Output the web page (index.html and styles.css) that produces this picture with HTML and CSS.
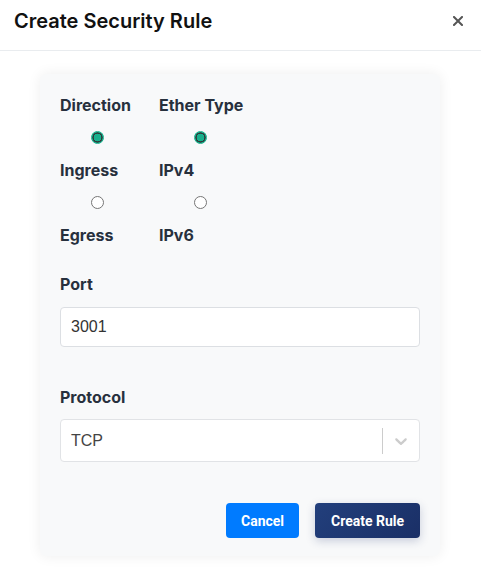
FILE: index.html
```html
<!DOCTYPE html>
<html lang="en">
<head>
<meta charset="utf-8">
<title>Create Security Rule</title>
<link rel="stylesheet" href="styles.css">
</head>
<body>
<div class="modal">
  <div class="modal-header">
    <h2 class="modal-title">Create Security Rule</h2>
    <button class="close-btn" aria-label="Close">
      <svg width="10" height="10" viewBox="0 0 10 10"><path d="M1 1L9 9M9 1L1 9" stroke="#555" stroke-width="2" stroke-linecap="square"/></svg>
    </button>
  </div>
  <div class="modal-body">
    <div class="card">
      <div class="radio-grid">
        <div class="radio-col col-direction">
          <div class="field-label">Direction</div>
          <input type="radio" class="radio" name="direction" checked>
          <div class="field-label">Ingress</div>
          <input type="radio" class="radio" name="direction">
          <div class="field-label">Egress</div>
        </div>
        <div class="radio-col col-ether">
          <div class="field-label">Ether Type</div>
          <input type="radio" class="radio" name="ether" checked>
          <div class="field-label">IPv4</div>
          <input type="radio" class="radio" name="ether">
          <div class="field-label">IPv6</div>
        </div>
      </div>

      <div class="field-label port-label">Port</div>
      <input class="text-input" type="text" value="3001">

      <div class="field-label protocol-label">Protocol</div>
      <div class="select">
        <div class="select-value">TCP</div>
        <span class="select-sep"></span>
        <div class="select-indicator">
          <svg width="20" height="20" viewBox="0 0 20 20"><path fill="#ccc" d="M4.516 7.548c0.436-0.446 1.043-0.481 1.576 0l3.908 3.747 3.908-3.747c0.533-0.481 1.141-0.446 1.574 0 0.436 0.445 0.408 1.197 0 1.615-0.406 0.418-4.695 4.502-4.695 4.502-0.217 0.223-0.502 0.335-0.787 0.335s-0.57-0.112-0.789-0.335c0 0-4.287-4.084-4.695-4.502s-0.436-1.170 0-1.615z"/></svg>
        </div>
      </div>

      <div class="actions">
        <button class="btn btn-cancel">Cancel</button>
        <button class="btn btn-create">Create Rule</button>
      </div>
    </div>
  </div>
</div>
</body>
</html>
```

FILE: styles.css
```css
* { box-sizing: border-box; }

html, body {
  margin: 0;
  padding: 0;
  background: #ffffff;
}

body {
  font-family: Inter, "Liberation Sans", Arial, sans-serif;
  width: 481px;
  height: 572px;
  overflow: hidden;
}

.modal-header {
  height: 51px;
  border-bottom: 1px solid #e9ecef;
  display: flex;
  align-items: flex-start;
  justify-content: space-between;
  padding: 9px 14px 0 14px;
}

.modal-title {
  margin: 0;
  font-size: 20px;
  font-weight: 600;
  line-height: 24px;
  color: #111111;
}

.close-btn {
  border: none;
  background: none;
  padding: 0;
  margin-top: 7px;
  margin-right: 4px;
  width: 10px;
  height: 10px;
  display: flex;
}

.modal-body {
  padding: 23px 41px 0 40px;
}

.card {
  width: 400px;
  background: #f8f9fa;
  border-radius: 6px;
  box-shadow: 0 0 14px rgba(0, 0, 0, 0.07);
  padding: 21px 20px 18px 20px;
  display: flex;
  flex-direction: column;
}

.radio-grid {
  display: flex;
  gap: 24px;
}

.radio-col {
  display: flex;
  flex-direction: column;
  align-items: flex-start;
}

.col-direction { width: 75px; }
.col-ether { width: 83px; }

.field-label {
  font-size: 16px;
  font-weight: 700;
  line-height: 20px;
  color: #27303d;
  white-space: nowrap;
}

.radio {
  appearance: none;
  -webkit-appearance: none;
  margin: 16px 0;
  width: 13px;
  height: 13px;
  border-radius: 50%;
  align-self: center;
  background: #ffffff;
  border: 1px solid #767676;
}

.radio:checked {
  border: 1px solid #17b08c;
  background: radial-gradient(circle, #17b08c 0 3.6px, #2f3b3a 4.1px 4.9px, #17b08c 5.3px);
}

.port-label { margin-top: 29px; }

.text-input {
  margin-top: 13px;
  height: 40px;
  width: 360px;
  border: 1px solid #dcdfe3;
  border-radius: 4px;
  background: #ffffff;
  padding: 0 10px;
  font-family: "Liberation Sans", Arial, sans-serif;
  font-size: 16px;
  color: #333333;
  outline: none;
}

.protocol-label { margin-top: 40px; }

.select {
  margin-top: 12px;
  height: 43px;
  width: 360px;
  border: 1px solid #e1e3e6;
  border-radius: 4px;
  background: #ffffff;
  display: flex;
  align-items: center;
}

.select-value {
  flex: 1;
  padding-left: 10px;
  font-family: "Liberation Sans", Arial, sans-serif;
  font-size: 16px;
  color: #444444;
}

.select-sep {
  width: 1px;
  height: 26px;
  background: #cccccc;
}

.select-indicator {
  padding: 8px;
  display: flex;
}

.actions {
  margin-top: 41px;
  display: flex;
  justify-content: flex-end;
  gap: 16px;
}

.btn {
  height: 35px;
  border: none;
  border-radius: 4px;
  padding: 0 15px;
  font-family: Roboto, "Liberation Sans", Arial, sans-serif;
  font-size: 14px;
  font-weight: 700;
  color: #ffffff;
}

.btn-cancel {
  background: #007bff;
  width: 73px;
}

.btn-create {
  width: 105px;
  background: linear-gradient(135deg, #223f7c, #1a2f66);
  box-shadow: 0 3px 10px rgba(30, 50, 110, 0.22);
}
```
